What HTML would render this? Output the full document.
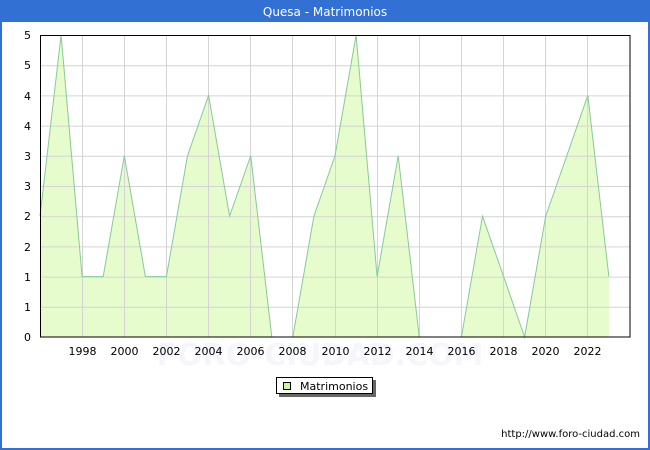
<!DOCTYPE html>
<html><head><meta charset="utf-8"><style>
html,body{margin:0;padding:0;background:#fff;}
svg{display:block;}
</style></head><body>
<svg width="650" height="450" xmlns="http://www.w3.org/2000/svg" font-family="'DejaVu Sans','Liberation Sans',sans-serif">
<rect x="0" y="0" width="650" height="450" fill="#fff"/>
<rect x="1" y="1" width="648" height="448" fill="none" stroke="#3370d4" stroke-width="2"/>
<rect x="0" y="0" width="650" height="22" fill="#3370d4"/>
<text x="325" y="16" font-size="12" fill="#fff" text-anchor="middle">Quesa - Matrimonios</text>
<polygon fill="#e6fccc" points="40,337 40,216.2 61.1,35 82.1,276.6 103.2,276.6 124.3,155.8 145.4,276.6 166.4,276.6 187.5,155.8 208.6,95.4 229.6,216.2 250.7,155.8 271.8,337 292.8,337 313.9,216.2 335,155.8 356.1,35 377.1,276.6 398.2,155.8 419.3,337 440.3,337 461.4,337 482.5,216.2 503.6,276.6 524.6,337 545.7,216.2 566.8,155.8 587.8,95.4 608.9,276.6 608.9,337"/>
<g stroke="#d4d4d4" stroke-width="1">
<line x1="40" y1="65.7" x2="630" y2="65.7"/><line x1="40" y1="95.9" x2="630" y2="95.9"/>
<line x1="40" y1="126.1" x2="630" y2="126.1"/><line x1="40" y1="156.3" x2="630" y2="156.3"/>
<line x1="40" y1="186.5" x2="630" y2="186.5"/><line x1="40" y1="216.7" x2="630" y2="216.7"/>
<line x1="40" y1="246.9" x2="630" y2="246.9"/><line x1="40" y1="277.1" x2="630" y2="277.1"/>
<line x1="40" y1="307.3" x2="630" y2="307.3"/>
<line x1="82.5" y1="35" x2="82.5" y2="337"/><line x1="124.5" y1="35" x2="124.5" y2="337"/>
<line x1="166.5" y1="35" x2="166.5" y2="337"/><line x1="208.5" y1="35" x2="208.5" y2="337"/>
<line x1="250.5" y1="35" x2="250.5" y2="337"/><line x1="292.5" y1="35" x2="292.5" y2="337"/>
<line x1="335.5" y1="35" x2="335.5" y2="337"/><line x1="377.5" y1="35" x2="377.5" y2="337"/>
<line x1="419.5" y1="35" x2="419.5" y2="337"/><line x1="461.5" y1="35" x2="461.5" y2="337"/>
<line x1="503.5" y1="35" x2="503.5" y2="337"/><line x1="545.5" y1="35" x2="545.5" y2="337"/>
<line x1="587.5" y1="35" x2="587.5" y2="337"/>
</g>
<polyline fill="none" stroke="#88c999" stroke-width="1" points="40,216.2 61.1,35 82.1,276.6 103.2,276.6 124.3,155.8 145.4,276.6 166.4,276.6 187.5,155.8 208.6,95.4 229.6,216.2 250.7,155.8 271.8,337 292.8,337 313.9,216.2 335,155.8 356.1,35 377.1,276.6 398.2,155.8 419.3,337 440.3,337 461.4,337 482.5,216.2 503.6,276.6 524.6,337 545.7,216.2 566.8,155.8 587.8,95.4 608.9,276.6"/>
<rect x="40.5" y="35.5" width="589.5" height="301.5" fill="none" stroke="#000" stroke-width="1"/>
<text x="320" y="365" font-size="30" fill="#f5f5fc" text-anchor="middle" font-weight="bold">FORO-CIUDAD.COM</text>
<g font-size="11" fill="#000" text-anchor="end">
<text x="31" y="341">0</text><text x="31" y="311">1</text><text x="31" y="281">1</text>
<text x="31" y="251">2</text><text x="31" y="220">2</text><text x="31" y="190">3</text>
<text x="31" y="160">3</text><text x="31" y="130">4</text><text x="31" y="100">4</text>
<text x="31" y="69">5</text><text x="31" y="39">5</text>
</g>
<g font-size="11" fill="#000" text-anchor="middle">
<text x="82.5" y="355">1998</text><text x="124.5" y="355">2000</text><text x="166.5" y="355">2002</text>
<text x="208.5" y="355">2004</text><text x="250.5" y="355">2006</text><text x="292.5" y="355">2008</text>
<text x="335.5" y="355">2010</text><text x="377.5" y="355">2012</text><text x="419.5" y="355">2014</text>
<text x="461.5" y="355">2016</text><text x="503.5" y="355">2018</text><text x="545.5" y="355">2020</text>
<text x="587.5" y="355">2022</text>
</g>
<rect x="279" y="380" width="97" height="17" fill="#666"/>
<rect x="276.5" y="377.5" width="96" height="16" fill="#fff" stroke="#000" stroke-width="1"/>
<rect x="283.5" y="382.5" width="7" height="7" fill="#ccf5a0" stroke="#000" stroke-width="1"/>
<text x="300" y="390" font-size="11" fill="#000">Matrimonios</text>
<text x="640" y="437" font-size="10" fill="#000" text-anchor="end">http://www.foro-ciudad.com</text>
</svg>
</body></html>
